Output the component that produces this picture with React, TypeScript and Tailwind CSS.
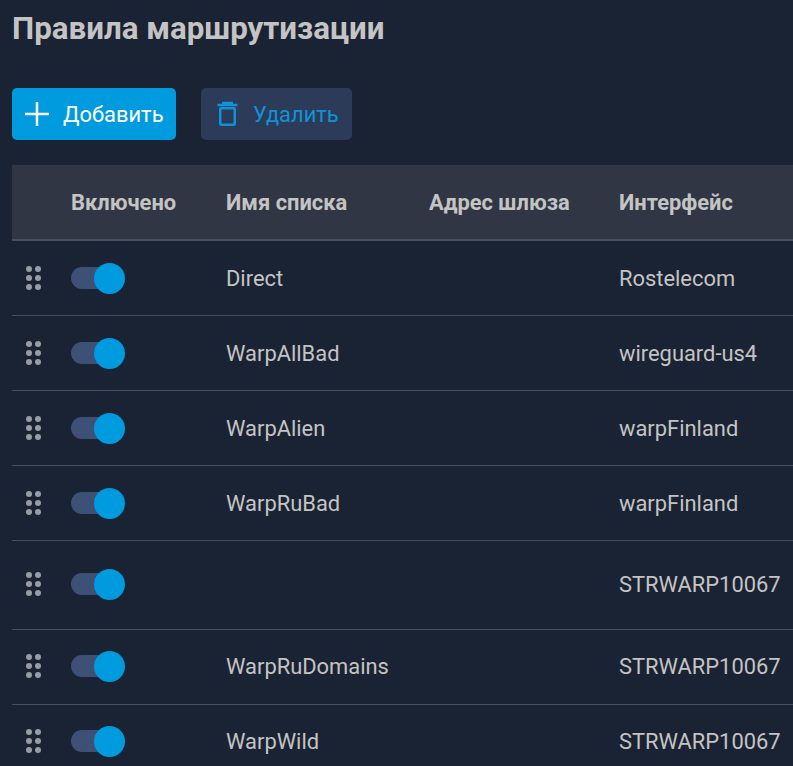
const rows = [
  { name: 'Direct', iface: 'Rostelecom', cls: 'h-[75px]' },
  { name: 'WarpAllBad', iface: 'wireguard-us4', cls: 'h-[75px]' },
  { name: 'WarpAlien', iface: 'warpFinland', cls: 'h-[75px]' },
  { name: 'WarpRuBad', iface: 'warpFinland', cls: 'h-[75px]' },
  { name: '', iface: 'STRWARP10067', cls: 'h-[89px] pb-[2px]' },
  { name: 'WarpRuDomains', iface: 'STRWARP10067', cls: 'h-[75px] pb-[2px]' },
  { name: 'WarpWild', iface: 'STRWARP10067', cls: 'h-[75px] pb-[2px]' },
]

function DragHandle() {
  return (
    <div className="grid w-[15px] grid-cols-2 gap-x-[3px] gap-y-[3px]">
      {[0, 1, 2, 3, 4, 5].map((i) => (
        <span key={i} className="h-[6px] w-[6px] rounded-full bg-[#989ca3]" />
      ))}
    </div>
  )
}

function Toggle() {
  return (
    <div className="relative h-[22px] w-[54px]">
      <div className="h-[22px] w-[44px] rounded-full bg-[#3d5177]" />
      <div className="absolute -top-[4px] left-[23px] h-[31px] w-[31px] rounded-full bg-[#009ade]" />
    </div>
  )
}

export default function App() {
  return (
    <div className="h-[766px] w-[793px] overflow-hidden bg-[#1a2333] pl-[12px] font-['Roboto',sans-serif] text-[21.9px] text-[#c4c4c4]">
      <h1 className="h-[88px] pt-[11px] text-[31.3px] leading-[36px] font-bold">
        Правила маршрутизации
      </h1>
      <div className="flex gap-[25px]">
        <button
          className="flex h-[52px] w-[164px] items-center rounded-[5px] bg-[#009ade] pl-[13px] text-white"
          type="button"
        >
          <svg width="24" height="24" viewBox="0 0 24 24" stroke="currentColor" strokeWidth="2.5" fill="none">
            <path d="M12 0v24M0 12h24" />
          </svg>
          <span className="ml-[14px] pt-[2px]">Добавить</span>
        </button>
        <button
          className="flex h-[52px] w-[151px] items-center rounded-[5px] bg-[#2b3b58] pl-[16px] text-[#0f93d8]"
          type="button"
        >
          <svg width="22" height="26" viewBox="0 0 22 26" stroke="currentColor" strokeWidth="2.5" fill="none">
            <path d="M0.5 4h20" />
            <path d="M5 2h11" />
            <rect x="3.25" y="7.25" width="14.5" height="16.5" rx="1" />
          </svg>
          <span className="ml-[14px] pt-[2px]">Удалить</span>
        </button>
      </div>
      <div className="mt-[25px]">
        <div className="flex h-[76px] items-center border-b-2 border-[#4a4f5a] bg-[#303643] pt-[2px] font-bold">
          <div className="w-[59px]" />
          <div className="w-[155px]">Включено</div>
          <div className="w-[203px]">Имя списка</div>
          <div className="w-[190px]">Адрес шлюза</div>
          <div>Интерфейс</div>
        </div>
        {rows.map((row, i) => (
          <div key={i} className={`flex items-center border-b border-[#4a4f5a] ${row.cls}`}>
            <div className="w-[59px] pl-[14px]">
              <DragHandle />
            </div>
            <div className="w-[155px]">
              <Toggle />
            </div>
            <div className="w-[393px] pt-[2px]">{row.name}</div>
            <div className="pt-[2px]">{row.iface}</div>
          </div>
        ))}
      </div>
    </div>
  )
}
